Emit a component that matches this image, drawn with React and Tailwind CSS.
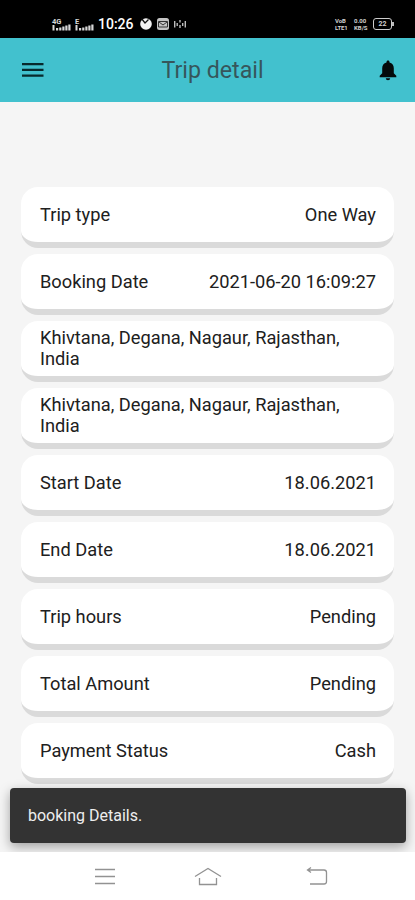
import React from "react";

const details = [
    { label: "Trip type", value: "One Way" },
    { label: "Booking Date", value: "2021-06-20 16:09:27" },
    { label: "Khivtana, Degana, Nagaur, Rajasthan, India" },
    { label: "Khivtana, Degana, Nagaur, Rajasthan, India" },
    { label: "Start Date", value: "18.06.2021" },
    { label: "End Date", value: "18.06.2021" },
    { label: "Trip hours", value: "Pending" },
    { label: "Total Amount", value: "Pending" },
    { label: "Payment Status", value: "Cash" },
];

const SignalIcon = ({ network }) => (
    <svg width="20" height="13" viewBox="0 0 20 13" fill="#d8d8d8">
        <text x="1" y="6" fontSize="7.5" fontWeight="700">{network}</text>
        <path d="M1.500 7h2v5.500h-2zM5 10h2.200v2.500H5zM8.200 9.500h2.200v3H8.200zM11.300 8.500h2.200v4h-2.200zM14.300 7.500h2.200v5h-2.200zM17.300 6.500h2.200v6h-2.200z" />
    </svg>
);

const StatusBar = () => (
    <div className="flex h-[38px] shrink-0 items-center bg-black pt-[10px] pr-[21px] pl-[51px] text-white">
        <div className="flex w-[47px] shrink-0 gap-[3px]">
            <SignalIcon network="4G" />
            <SignalIcon network="E" />
        </div>
        <span className="w-[41px] shrink-0 text-[14px] leading-4 font-medium">10:26</span>
        <svg className="shrink-0" width="48" height="14" viewBox="0 0 48 14">
            <circle cx="7" cy="7" r="5.800" fill="#f2f2f2" />
            <path d="M2.500 1.500l3.500 4.500L9.500 2.500" fill="none" stroke="#111" strokeWidth="1.300" />
            <rect x="18" y="1" width="12" height="12" rx="2.500" fill="#c4c4c4" />
            <path d="M19.500 4.500h9v5.500h-9zM20 5l4 3 4-3" fill="none" stroke="#333" />
            <path d="M35.700 4v6.500M38.200 6v3M46.300 4v6.500M43.700 6v3M41 3v2.500M41 8v3" stroke="#bbb" strokeWidth="1.400" />
        </svg>
        <div className="ml-auto flex items-center gap-[5px] text-[6px] leading-[7px] font-bold text-[#d0d0d0]">
            <div className="w-[14px] tracking-[-0.1px]">
                <div>VoB</div>
                <div>LTE1</div>
            </div>
            <div className="w-[14px]">
                <div>0.00</div>
                <div>KB/S</div>
            </div>
            <div className="flex items-center">
                <div className="flex h-3 w-[19px] items-center justify-center rounded-[3px] border border-[#ccc] text-[7px]">22</div>
                <div className="h-1 w-[2px] bg-[#bbb]" />
            </div>
        </div>
    </div>
);

const Header = () => (
    <header className="flex h-16 shrink-0 items-center justify-between bg-[#42c1ce] pr-[18px] pl-[22px]">
        <svg width="22" height="16" viewBox="0 0 22 16" fill="#072a2d">
            <path d="M0 1h21.500v2.300H0zM0 6.700h21.500V9H0zM0 12.400h21.500v2.300H0z" />
        </svg>
        <h1 className="ml-[2px] text-[23.200px] leading-7 text-[#36565b]">Trip detail</h1>
        <svg width="18" height="21" viewBox="0 0 18 21" fill="#040a0b">
            <path d="M9 .5c-.9 0-1.500.6-1.500 1.500v.5C4.700 3.200 3.200 5.500 3.200 8.300v5L.7 15.800v1.400h16.600v-1.400l-2.500-2.500v-5c0-2.800-1.500-5.100-4.300-5.800V2c0-.9-.6-1.500-1.500-1.500zM6.800 18.300a2.200 2 0 0 0 4.400 0z" />
        </svg>
    </header>
);

const DetailCard = ({ label, value }) => (
    <div className="flex h-[61px] shrink-0 items-center justify-between rounded-[17px] border-b-[6px] border-[#dadada] bg-white pr-[18px] pb-px pl-[19px] text-[18.250px] leading-[21px] text-[#202020]">
        <span>{label}</span>
        {value && <span>{value}</span>}
    </div>
);

const NavigationBar = () => (
    <nav className="h-12 shrink-0 bg-white">
        <svg width="415" height="48" viewBox="0 0 415 48" fill="none" stroke="#929292" strokeWidth="1.300">
            <path d="M95 17.500h20M95 24.500h20M95 31.500h20" />
            <path d="M195 24.500l13-8 13 8M199.500 26v6.500h17V26" />
            <path d="M311 15.500l-3.500 2.500 3.500 2.500M308 18h16q2.500 0 2.500 2.500v9q0 2.500-2.500 2.500h-14" />
        </svg>
    </nav>
);

const App = () => {
    return (
        <div className="relative flex h-[900px] w-[415px] flex-col overflow-hidden bg-[#f5f5f5] font-['Roboto',sans-serif]">
            <StatusBar />
            <Header />
            <main className="flex min-h-0 flex-1 flex-col gap-1.5 overflow-hidden pt-[85px] pr-[21px] pl-[21px]">
                {details.map((item, index) => (
                    <DetailCard key={index} label={item.label} value={item.value} />
                ))}
            </main>
            <NavigationBar />

            {/* snackbar */}
            <div className="absolute inset-x-0 bottom-12 h-[90px] overflow-hidden">
                <div className="mr-[9px] ml-[10px] mt-[26px] flex h-[55px] items-center rounded-[4px] bg-[#333333] pl-[18px] text-[16px] text-[#eeeeee] shadow-[0_4px_12px_rgba(0,0,0,0.35)]">
                    booking Details.
                </div>
            </div>
        </div>
    );
};

export default App;
